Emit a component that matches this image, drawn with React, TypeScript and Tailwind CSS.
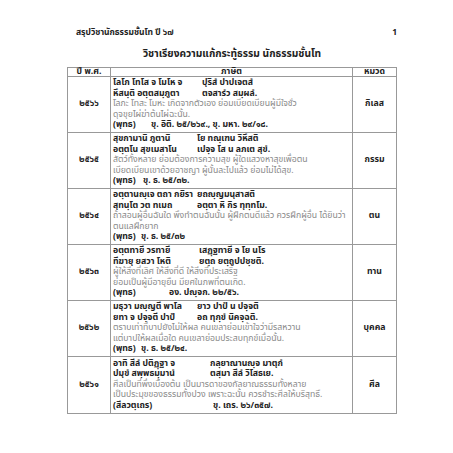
const rows = [
  {
    year: "๒๕๖๖",
    cat: "กิเลส",
    pali: [
      ["โลโภ โทโส จ โมโห จ", "ปุริสํ ปาปเจตสํ"],
      ["หึสนฺติ อตฺตสมฺภูตา", "ตจสารํว สมฺผลํ."],
    ],
    thai: [
      "โลภะ โทสะ โมหะ เกิดจากตัวเอง ย่อมเบียดเบียนผู้มีใจชั่ว",
      "ดุจขุยไผ่ฆ่าต้นไผ่ฉะนั้น.",
    ],
    src: "(พุทธ)",
    ref: "ขุ. อิติ. ๒๕/๒๖๙., ขุ. มหา. ๒๙/๑๘.",
    pw: "w-[89px]",
    rw: "w-[38px]",
  },
  {
    year: "๒๕๖๕",
    cat: "กรรม",
    pali: [
      ["สุขกามานิ ภูตานิ", "โย ทณฺเฑน วิหึสติ"],
      ["อตฺตโน สุขเมสาโน", "เปจฺจ โส น ลภเต สุขํ."],
    ],
    thai: [
      "สัตว์ทั้งหลาย ย่อมต้องการความสุข ผู้ใดแสวงหาสุขเพื่อตน",
      "เบียดเบียนเขาด้วยอาชญา ผู้นั้นละไปแล้ว ย่อมไม่ได้สุข.",
    ],
    src: "(พุทธ)",
    ref: "ขุ. ธ. ๒๕/๓๒.",
    pw: "w-[84px]",
    rw: "w-[30px]",
  },
  {
    year: "๒๕๖๔",
    cat: "ตน",
    pali: [
      ["อตฺตานญฺเจ ตถา กยิรา", "ยถญฺญมนุสาสติ"],
      ["สุทนฺโต วต ทเมถ", "อตฺตา หิ กิร ทุทฺทโม."],
    ],
    thai: [
      "ถ้าสอนผู้อื่นฉันใด พึงทำตนฉันนั้น ผู้ฝึกตนดีแล้ว ควรฝึกผู้อื่น ได้ยินว่า",
      "ตนแลฝึกยาก",
    ],
    src: "(พุทธ)",
    ref: "ขุ. ธ. ๒๕/๓๒",
    pw: "w-[84px]",
    rw: "w-[28px]",
  },
  {
    year: "๒๕๖๓",
    cat: "ทาน",
    pali: [
      ["อตฺตทายี วรทายี", "เสฏฺฐทายี จ โย นโร"],
      ["ทีฆายุ ยสวา โหติ", "ยตฺถ ยตฺถูปปชฺชติ."],
    ],
    thai: [
      "ผู้ให้สิ่งที่เลิศ ให้สิ่งที่ดี ให้สิ่งที่ประเสริฐ",
      "ย่อมเป็นผู้มีอายุยืน มียศในภพที่ตนเกิด.",
    ],
    src: "(พุทธ)",
    ref: "อง. ปญฺจก. ๒๒/๕๖.",
    pw: "w-[86px]",
    rw: "w-[56px]",
  },
  {
    year: "๒๕๖๒",
    cat: "บุคคล",
    pali: [
      ["มธุวา มญฺญตี พาโล", "ยาว ปาปํ น ปจฺจติ"],
      ["ยทา จ ปจฺจตี ปาปํ", "อถ ทุกฺขํ นิคจฺฉติ."],
    ],
    thai: [
      "ตราบเท่าที่บาปยังไม่ให้ผล คนเขลาย่อมเข้าใจว่ามีรสหวาน",
      "แต่บาปให้ผลเมื่อใด คนเขลาย่อมประสบทุกข์เมื่อนั้น.",
    ],
    src: "(พุทธ)",
    ref: "ขุ. ธ. ๒๕/๒๔.",
    pw: "w-[84px]",
    rw: "w-[28px]",
  },
  {
    year: "๒๕๖๑",
    cat: "ศีล",
    pali: [
      ["อาทิ สีลํ ปติฏฺฐา จ", "กลฺยาณานญฺจ มาตุกํ"],
      ["ปมุขํ สพฺพธมฺมานํ", "ตสฺมา สีลํ วิโสธเย."],
    ],
    thai: [
      "ศีลเป็นที่พึ่งเบื้องต้น เป็นมารดาของกัลยาณธรรมทั้งหลาย",
      "เป็นประมุขของธรรมทั้งปวง เพราะฉะนั้น ควรชำระศีลให้บริสุทธิ์.",
    ],
    src: "(สีลวตฺเถร)",
    ref: "ขุ. เถร. ๒๖/๓๕๗.",
    pw: "w-[97px]",
    rw: "w-[100px]",
  },
];

const font = "font-['Noto_Sans_Thai','Noto_Sans','DejaVu_Sans',sans-serif]";

export default function App() {
  return (
    <div className={`h-[453px] w-[453px] overflow-hidden bg-white pl-[67px] pt-[28px] text-[#222] ${font}`}>
      <div className="w-[330px]">
        <div className="flex h-[10px] items-center justify-between pl-[9px] text-[8.5px] leading-[10px] font-bold">
          <span>สรุปวิชานักธรรมชั้นโท ปี ๖๗</span>
          <span>1</span>
        </div>
        <h1 className="mt-[9px] flex h-[14px] items-center justify-center text-[10.2px] leading-[14px] font-bold">
          วิชาเรียงความแก้กระทู้ธรรม นักธรรมชั้นโท
        </h1>
        <div className="mt-[6px] border border-[#999] text-[8.7px] leading-[10.6px]">
          <div className="flex h-[9px] border-b border-[#999] font-bold">
            <div className="flex w-[43px] items-center justify-center border-r border-[#999]">ปี พ.ศ.</div>
            <div className="flex w-[242px] items-center justify-center border-r border-[#999]">ภาษิต</div>
            <div className="flex flex-1 items-center justify-center">หมวด</div>
          </div>
          {rows.map((r, idx) => (
            <div
              key={r.year}
              className={`flex h-[56px] ${idx < rows.length - 1 ? "border-b border-[#999]" : ""}`}
            >
              <div className="flex w-[43px] items-center justify-center border-r border-[#999] font-bold">
                {r.year}
              </div>
              <div className="flex w-[242px] flex-col justify-center border-r border-[#999] px-[2px]">
                {r.pali.map((p, i) => (
                  <div key={i} className="flex h-[10.6px] items-center whitespace-nowrap font-bold">
                    <span className={`${r.pw} shrink-0`}>{p[0]}</span>
                    <span>{p[1]}</span>
                  </div>
                ))}
                {r.thai.map((t, i) => (
                  <div key={i} className="flex h-[10.6px] items-center whitespace-nowrap text-[#8a8a8a]">
                    {t}
                  </div>
                ))}
                <div className="flex h-[10.6px] items-center whitespace-nowrap font-bold">
                  <span className={`${r.rw} shrink-0`}>{r.src}</span>
                  <span>{r.ref}</span>
                </div>
              </div>
              <div className="flex flex-1 items-center justify-center font-bold">{r.cat}</div>
            </div>
          ))}
        </div>
      </div>
    </div>
  );
}
